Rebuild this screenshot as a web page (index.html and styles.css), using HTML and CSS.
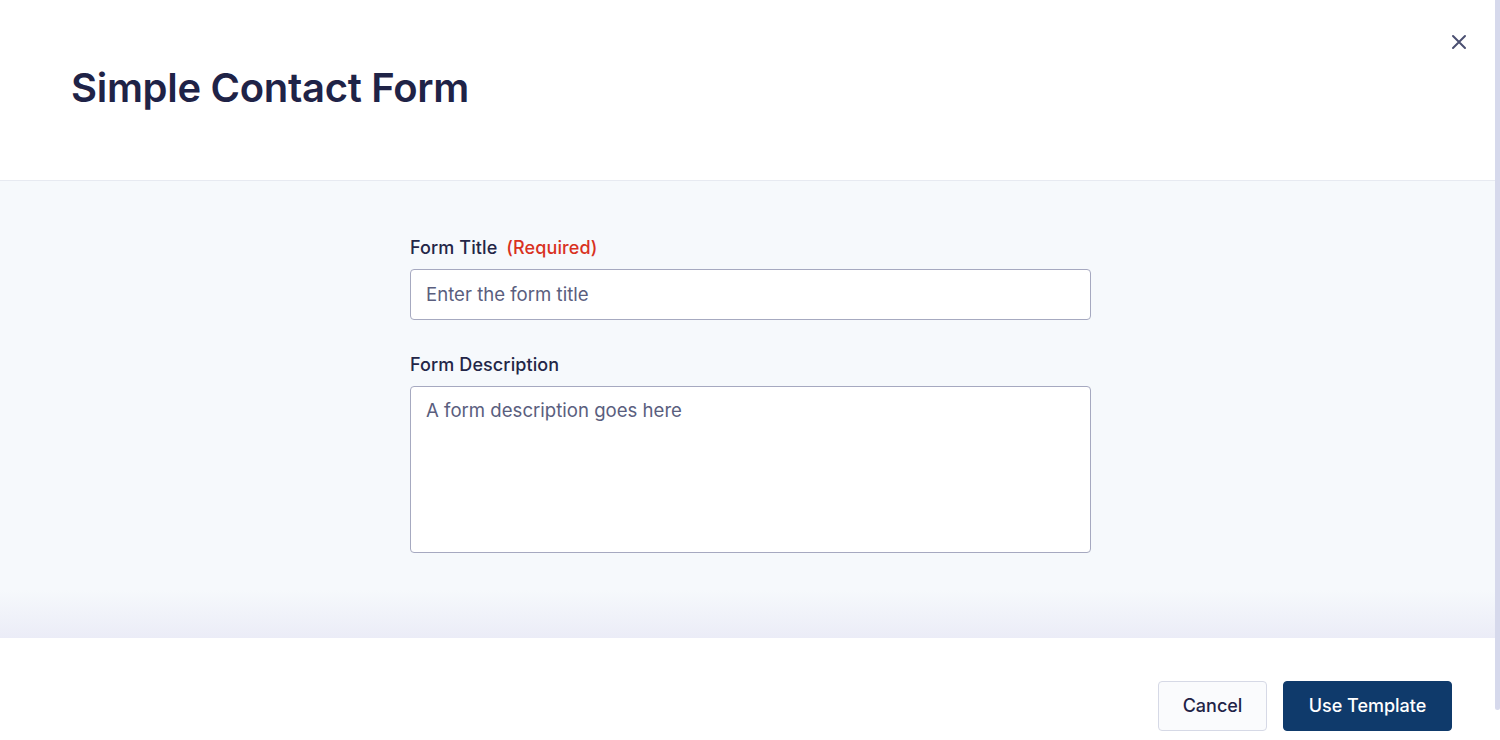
FILE: index.html
```html
<!DOCTYPE html>
<html>
<head>
<meta charset="utf-8">
<link rel="stylesheet" href="styles.css">
</head>
<body>
<div class="screen">
  <div class="modal">
    <header class="modal-header">
      <h1 class="title">Simple Contact Form</h1>
      <button class="close" aria-label="Close">
        <svg width="16" height="16" viewBox="0 0 16 16"><path d="M2 2 L14 14 M14 2 L2 14" stroke="#4b5072" stroke-width="2" stroke-linecap="round" fill="none"/></svg>
      </button>
    </header>
    <main class="modal-body">
      <div class="form">
        <label class="label">Form Title <span class="req">(Required)</span></label>
        <div class="input">Enter the form title</div>
        <label class="label label-gap">Form Description</label>
        <div class="input textarea">A form description goes here</div>
      </div>
    </main>
    <footer class="modal-footer">
      <button class="btn btn-cancel">Cancel</button>
      <button class="btn btn-primary">Use Template</button>
    </footer>
  </div>
  <div class="scrollbar"><div class="thumb"></div></div>
</div>
</body>
</html>
```

FILE: styles.css
```css
* { box-sizing: border-box; }
html, body { margin: 0; padding: 0; }
body {
  font-family: Inter, "Noto Sans", sans-serif;
  background: #ffffff;
  width: 1500px;
  height: 740px;
  overflow: hidden;
}
.screen {
  display: flex;
  height: 740px;
}
.modal {
  width: 1495px;
  display: flex;
  flex-direction: column;
  height: 740px;
}
.modal-header {
  position: relative;
  height: 181px;
  border-bottom: 1px solid #e7eaf1;
  padding: 64px 0 0 71px;
  background: #fff;
}
.title {
  margin: 0;
  font-size: 40px;
  line-height: 48px;
  font-weight: 600;
  color: #1f2347;
  letter-spacing: -0.3px;
}
.close {
  position: absolute;
  top: 34px;
  left: 1451px;
  width: 16px;
  height: 16px;
  padding: 0;
  border: 0;
  background: none;
  display: flex;
}
.modal-body {
  flex: 1;
  background: linear-gradient(to bottom, #f6f9fc calc(100% - 48px), #ebecf7 100%);
  padding-top: 55px;
  display: flex;
  justify-content: center;
}
.form {
  width: 681px;
  margin-left: 6px;
  display: flex;
  flex-direction: column;
}
.label {
  display: block;
  font-size: 18px;
  line-height: 24px;
  font-weight: 500;
  color: #232647;
  margin-bottom: 9px;
  letter-spacing: 0.1px;
}
.req {
  color: #d9321f;
  margin-left: 4px;
}
.label-gap { margin-top: 33px; }
.input {
  height: 51px;
  background: #fff;
  border: 1px solid #a6a9c0;
  border-radius: 4px;
  padding: 11px 15px;
  font-size: 18.6px;
  line-height: 26px;
  color: #5a5e7e;
}
.textarea {
  height: 167px;
  padding-top: 10px;
}
.modal-footer {
  height: 102px;
  background: #fff;
  display: flex;
  justify-content: flex-end;
  align-items: flex-start;
  gap: 16px;
  padding: 43px 43px 0 0;
}
.btn {
  height: 50px;
  border-radius: 4px;
  font-family: Inter, "Noto Sans", sans-serif;
  font-size: 18px;
  font-weight: 500;
  padding: 0 0 2px;
  cursor: pointer;
}
.btn-cancel {
  width: 109px;
  background: #fafbfd;
  border: 1px solid #d6d9e6;
  color: #1f2347;
}
.btn-primary {
  width: 169px;
  background: #0f3a6b;
  border: 1px solid #0f3a6b;
  color: #fff;
}
.scrollbar {
  width: 5px;
  height: 740px;
  background: #fff;
}
.thumb {
  width: 5px;
  height: 710px;
  background: #d6d9ec;
  border-radius: 0 0 3px 3px;
}
```
